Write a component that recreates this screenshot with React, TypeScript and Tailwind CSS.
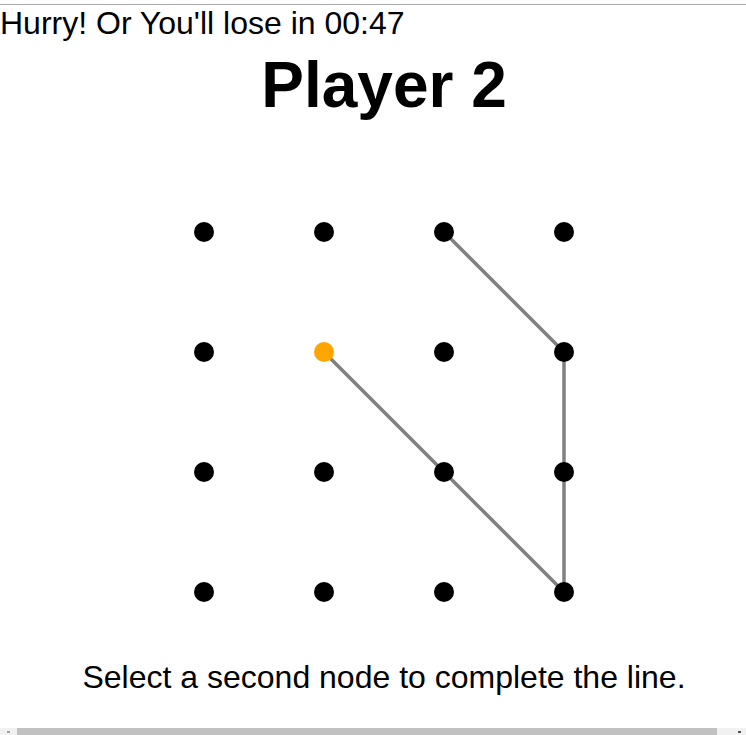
import React from "react";

const xs = [60, 180, 300, 420];
const ys = [60, 180, 300, 420];

const lines: [number, number, number, number][] = [
  [300, 60, 420, 180],
  [420, 180, 420, 420],
  [180, 180, 420, 420],
];

export default function App() {
  return (
    <div className="w-[746px] h-[735px] overflow-hidden bg-white flex flex-col font-['Liberation_Sans',Arial,sans-serif] text-black">
      <div className="h-[4px] shrink-0" />
      <div className="border-t border-[#a9a9a9] shrink-0" />
      <div className="flex-1 overflow-hidden">
        <div className="w-[768px] flex flex-col">
          <p className="text-[32px] leading-[37px] m-0">Hurry! Or You'll lose in 00:47</p>
          <h1 className="text-[64px] leading-[72px] font-bold text-center mt-[7px]">Player 2</h1>
          <svg
            width={480}
            height={480}
            viewBox="0 0 480 480"
            className="block mx-auto mt-[51px]"
          >
            {lines.map(([x1, y1, x2, y2], i) => (
              <line key={i} x1={x1} y1={y1} x2={x2} y2={y2} stroke="#808080" strokeWidth={3.5} />
            ))}
            {ys.map((y) =>
              xs.map((x) => (
                <circle
                  key={`${x}-${y}`}
                  cx={x}
                  cy={y}
                  r={10}
                  fill={x === 180 && y === 180 ? "#FFA500" : "#000000"}
                />
              ))
            )}
          </svg>
          <p className="text-[32px] leading-[37px] text-center mt-[7px]">
            Select a second node to complete the line.
          </p>
        </div>
      </div>
      <div className="h-[7px] shrink-0 bg-[#f1f1f1] flex items-start">
        <div className="w-[17px] h-full flex justify-center">
          <div className="w-[3px] h-[2px] bg-[#a3a3a3] mt-[3px]" />
        </div>
        <div className="w-[700px] h-full bg-[#c1c1c1]" />
        <div className="flex-1 h-full flex justify-end pr-[5px]">
          <div className="w-[3px] h-[2px] bg-[#505050] mt-[3px]" />
        </div>
      </div>
    </div>
  );
}
